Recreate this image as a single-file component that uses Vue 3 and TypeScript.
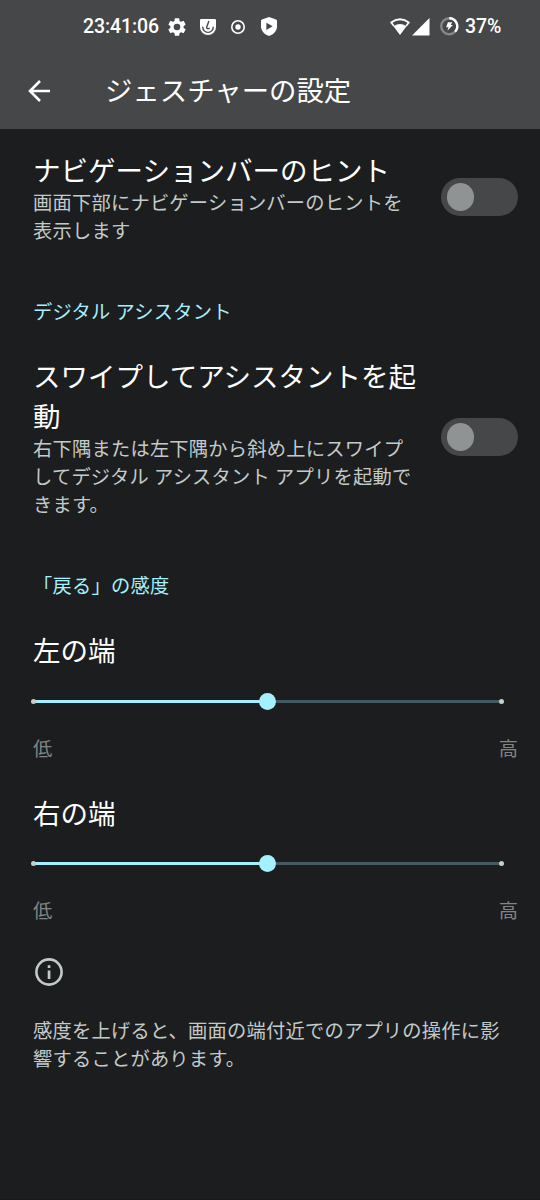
<script setup lang="ts">
interface Sensitivity {
  title: string
  value: number
}

const sliders: Sensitivity[] = [
  { title: '左の端', value: 50 },
  { title: '右の端', value: 50 },
]
</script>

<template>
  <div class="screen">
    <header class="header">
      <div class="status">
        <span class="clock">23:41:06</span>
        <svg class="gear" viewBox="0 0 24 24"><path fill="#fff" d="M19.14 12.94c.04-.3.06-.61.06-.94s-.02-.64-.07-.94l2.03-1.58a.49.49 0 0 0 .12-.61l-1.92-3.32a.488.488 0 0 0-.59-.22l-2.39.96c-.5-.38-1.03-.7-1.62-.94l-.36-2.54a.484.484 0 0 0-.48-.41h-3.84c-.24 0-.43.17-.47.41l-.36 2.54c-.59.24-1.13.57-1.62.94l-2.39-.96c-.22-.08-.47 0-.59.22L2.74 8.87c-.12.21-.08.47.12.61l2.03 1.58c-.05.3-.09.63-.09.94s.02.64.07.94l-2.03 1.58a.49.49 0 0 0-.12.61l1.92 3.32c.12.22.37.29.59.22l2.39-.96c.5.38 1.03.7 1.62.94l.36 2.54c.05.24.24.41.48.41h3.84c.24 0 .44-.17.47-.41l.36-2.54c.59-.24 1.13-.56 1.62-.94l2.39.96c.22.08.47 0 .59-.22l1.92-3.32a.49.49 0 0 0-.12-.61zM12 15.6a3.6 3.6 0 1 1 0-7.2 3.6 3.6 0 0 1 0 7.2z" /></svg>
        <svg class="mask" viewBox="0 0 16 16">
          <path fill="#fff" d="M1.2 0h13.6Q16 0 16 1.2V8a8 8 0 0 1-16 0V1.2Q0 0 1.2 0z" />
          <path fill="none" stroke="#464748" stroke-width="1.4" stroke-linecap="round" d="M2.8 8.2a5.2 5.2 0 0 0 10.4 0M8.7 2.5L6.6 8.6q.2 1.5 2.6.9" />
        </svg>
        <svg class="target" viewBox="0 0 14 14">
          <circle cx="7" cy="7" r="6.2" fill="none" stroke="#fff" stroke-width="1.6" />
          <circle cx="7" cy="7" r="2.7" fill="#fff" />
        </svg>
        <svg class="shield" viewBox="0 0 16 19">
          <path fill="#fff" d="M8 0l7 2.5q1 .4 1 1.5v5.2c0 4.5-3.3 8.1-8 9.8C3.3 17.3 0 13.7 0 9.2V4q0-1.1 1-1.5z" />
          <path fill="#464748" d="M5.4 5.7v7.2L11.6 9.3z" />
        </svg>
        <span class="spacer"></span>
        <svg class="wifi" viewBox="0 0 20 17">
          <path fill="#fff" d="M10 17L3.5 8.3Q10 3.9 16.5 8.3z" />
          <path fill="none" stroke="#fff" stroke-width="1.9" d="M.8 4.7Q10-2.3 19.2 4.7" />
          <path fill="#fff" d="M0 4.5L1.6 3.7 4.5 7.6 3.3 8.6zM20 4.5L18.4 3.7 15.5 7.6 16.7 8.6z" />
        </svg>
        <svg class="signal" viewBox="0 0 17 17"><path fill="#fff" d="M17 0v17H0z" /></svg>
        <svg class="battery" viewBox="0 0 18 18">
          <circle cx="9" cy="9" r="7.8" fill="none" stroke="#858687" stroke-width="2.3" />
          <path fill="none" stroke="#fff" stroke-width="2.3" d="M9 1.2a7.8 7.8 0 0 1 5.7 13.1" />
          <path fill="#fff" d="M7.7 5h4.1L10.5 7.9h2.1L7.2 13.3 8.3 9.9H6z" />
        </svg>
        <span class="percent">37%</span>
      </div>
      <div class="toolbar">
        <svg class="back" viewBox="0 0 22 22"><path fill="none" stroke="#fff" stroke-width="2.6" d="M22 11H2M12 1L2 11l10 10" /></svg>
        <h1>ジェスチャーの設定</h1>
      </div>
    </header>

    <main>
      <section class="pref first">
        <div class="copy">
          <h2>ナビゲーションバーのヒント</h2>
          <p>画面下部にナビゲーションバーのヒントを<br />表示します</p>
        </div>
        <div class="toggle"><i></i></div>
      </section>

      <h3 class="assistant">デジタル アシスタント</h3>

      <section class="pref second">
        <div class="copy">
          <h2>スワイプしてアシスタントを起<br />動</h2>
          <p>右下隅または左下隅から斜め上にスワイプ<br />してデジタル アシスタント アプリを起動で<br />きます。</p>
        </div>
        <div class="toggle"><i></i></div>
      </section>

      <h3 class="sensitivity">「戻る」の感度</h3>

      <section v-for="s in sliders" :key="s.title" class="slider">
        <h2>{{ s.title }}</h2>
        <div class="track">
          <div class="fill" :style="{ width: s.value + '%' }"></div>
          <i class="tick start"></i>
          <i class="tick end"></i>
          <i class="thumb" :style="{ left: s.value + '%' }"></i>
        </div>
        <div class="labels"><span>低</span><span>高</span></div>
      </section>

      <footer>
        <svg class="info" viewBox="0 0 28 28">
          <circle cx="14" cy="14" r="12.6" fill="none" stroke="#c3cbca" stroke-width="2.6" />
          <path fill="#c3cbca" d="M12.7 7.2h2.7v2.7h-2.7zM12.7 12.6h2.7v8.3h-2.7z" />
        </svg>
        <p>感度を上げると、画面の端付近でのアプリの操作に影<br />響することがあります。</p>
      </footer>
    </main>
  </div>
</template>

<style>
body {
  margin: 0;
  background: #1c1d1e;
}
</style>

<style scoped>
.screen {
  width: 540px;
  height: 1200px;
  overflow: hidden;
  box-sizing: border-box;
  border-bottom: 1px solid #191618;
  background: #1c1d1e;
  color: #fff;
  font-family: Roboto, "Noto Sans CJK JP", sans-serif;
}
h1, h2, h3, p {
  margin: 0;
  font-weight: 400;
  white-space: nowrap;
}
svg {
  display: block;
  flex: none;
  overflow: visible;
}
.header {
  height: 129px;
  background: #464748;
}
.status {
  display: flex;
  align-items: center;
  height: 53px;
  padding: 0 39px 0 83px;
  font-size: 19.5px;
  font-weight: 500;
  letter-spacing: -0.1px;
}
.clock {
  width: 76px;
}
.gear {
  width: 22px;
  height: 22px;
  margin-left: 7px;
}
.mask {
  width: 16px;
  height: 16px;
  margin-left: 12px;
}
.target {
  width: 14px;
  height: 14px;
  margin-left: 15px;
}
.shield {
  width: 16px;
  height: 19px;
  margin-left: 16px;
}
.spacer {
  flex: 1;
}
.wifi {
  width: 20px;
  height: 17px;
}
.signal {
  width: 17.5px;
  height: 17.5px;
  margin-left: 2px;
}
.battery {
  width: 18.5px;
  height: 18.5px;
  margin-left: 10.5px;
}
.percent {
  width: 36px;
  margin-left: 6.5px;
}
.toolbar {
  display: flex;
  align-items: center;
  height: 76px;
  padding-left: 28px;
}
.back {
  width: 22px;
  height: 22px;
}
h1 {
  margin-left: 55px;
  padding-top: 2px;
  font-size: 27.4px;
  line-height: 40px;
}
h2 {
  font-size: 27.5px;
  line-height: 40px;
}
p {
  color: #c3cbca;
  font-size: 19.25px;
  letter-spacing: 0.23px;
  line-height: 28px;
}
h3 {
  padding-left: 33px;
  color: #a4f0ff;
  font-size: 19.25px;
  letter-spacing: 0.23px;
  line-height: 28px;
}
.pref {
  display: flex;
  align-items: center;
  justify-content: space-between;
  padding: 0 22px 0 33px;
}
.first {
  height: 94px;
  padding-top: 21px;
}
.copy {
  padding-top: 4px;
}
.copy p {
  margin-top: -2px;
}
.toggle {
  display: flex;
  align-items: center;
  flex: none;
  width: 77px;
  height: 38.5px;
  box-sizing: border-box;
  padding-left: 5.5px;
  border-radius: 20px;
  background: #464748;
}
.toggle i {
  width: 27.5px;
  height: 27.5px;
  border-radius: 50%;
  background: #8f9393;
}
.assistant {
  margin-top: 55px;
}
.second {
  height: 162px;
  margin-top: 29px;
}
.sensitivity {
  margin-top: 55px;
}
.slider {
  height: 162.5px;
  padding: 0 22px 0 33px;
}
.sensitivity + .slider {
  margin-top: 31px;
}
.track {
  position: relative;
  width: 469px;
  height: 3px;
  margin: 27.5px 0 0 -0.5px;
  background: #435a60;
}
.fill {
  height: 3px;
  background: #a4f0ff;
}
.tick {
  position: absolute;
  top: -1px;
  width: 5px;
  height: 5px;
  border-radius: 50%;
  background: #c8cccc;
}
.start {
  left: -2px;
}
.end {
  right: -2.5px;
}
.thumb {
  position: absolute;
  top: -7px;
  width: 17px;
  height: 17px;
  margin-left: -8px;
  border-radius: 50%;
  background: #a4f0ff;
}
.labels {
  display: flex;
  justify-content: space-between;
  margin-top: 33px;
  color: #808685;
  font-size: 19.25px;
  line-height: 28px;
}
footer {
  padding: 1px 0 0 33px;
}
.info {
  width: 28px;
  height: 28px;
  margin-left: 2px;
}
footer p {
  margin-top: 32px;
}
</style>
